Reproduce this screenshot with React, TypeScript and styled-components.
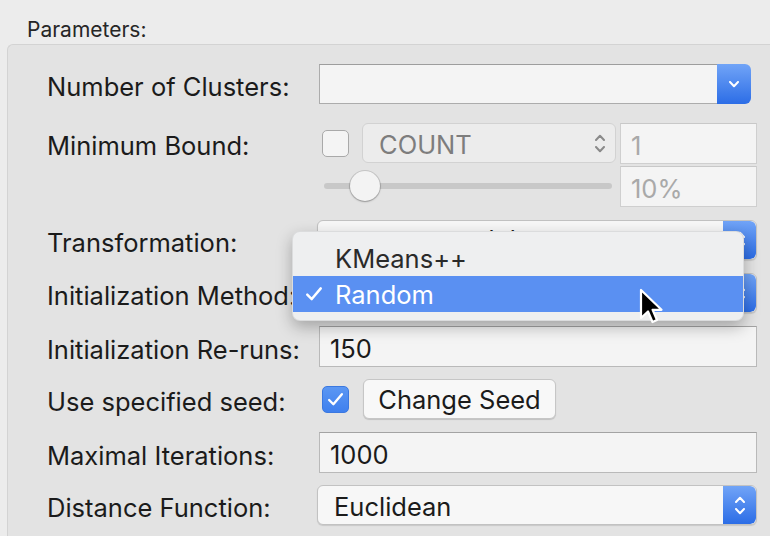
import React from "react"
import styled, { createGlobalStyle, css } from "styled-components"

const GlobalStyle = createGlobalStyle`
  html, body {
    margin: 0;
    background: #ececec;
    font-family: Inter, Roboto, "Liberation Sans", sans-serif;
    color: #1b1b1b;
  }
`

const Page = styled.div`
  position: relative;
  width: 770px;
  height: 536px;
  overflow: hidden;
  background: #ececec;
`

const Title = styled.div`
  height: 44px;
  box-sizing: border-box;
  padding: 18px 0 0 27px;
  font-size: 21px;
  line-height: 24px;
  color: #262626;
`

const Panel = styled.div`
  margin-left: 7px;
  height: 520px;
  box-sizing: border-box;
  background: #e3e3e3;
  border: 1px solid #d3d3d3;
  border-right: none;
  border-radius: 6px 0 0 0;
  padding: 19px 13px 0 39px;
`

const Form = styled.div`
  display: flex;
  flex-direction: column;
  gap: 13px;
`

const Row = styled.div<{ $top?: boolean; $shift?: number }>`
  display: grid;
  grid-template-columns: 270px 1fr;
  align-items: ${(p) => (p.$top ? "start" : "center")};
  height: ${(p) => (p.$top ? "auto" : "40px")};
  margin-top: ${(p) => p.$shift ?? 0}px;
`

const Label = styled.div`
  font-size: 25.5px;
  height: 40px;
  line-height: 45px;
  white-space: nowrap;
`

const Field = styled.div<{ $disabled?: boolean; $inset?: number }>`
  height: 41px;
  box-sizing: border-box;
  margin-left: ${(p) => p.$inset ?? 2}px;
  background: #f4f4f4;
  border: 1px solid ${(p) => (p.$disabled ? "#cfcfcf" : "#b9b9b9")};
  border-top-color: ${(p) => (p.$disabled ? "#c8c8c8" : "#a3a3a3")};
  padding-left: 10px;
  font-size: 25.5px;
  line-height: 44px;
  color: ${(p) => (p.$disabled ? "#a9a9a9" : "#1b1b1b")};
`

const Combo = styled.div`
  display: flex;
  height: 40px;
  margin: 0 6px 0 2px;
`

const ComboField = styled.div`
  flex: 1;
  background: #f4f4f4;
  border: 1px solid #acacac;
  border-right: none;
  border-top-color: #9d9d9d;
`

const blueGradient = css`
  background: linear-gradient(#71a4f7, #2c6de6);
  border-radius: 0 6px 6px 0;
  display: flex;
  flex-direction: column;
  align-items: center;
  justify-content: center;
`

const ComboButton = styled.div`
  ${blueGradient};
  width: 34px;
`

const Popup = styled.div<{ $disabled?: boolean }>`
  display: flex;
  height: 40px;
  box-sizing: border-box;
  border-radius: 6px;
  overflow: hidden;
  ${(p) =>
    p.$disabled
      ? css`
          background: #ececec;
          border: 1px solid #d2d2d2;
          color: #7d7d7d;
        `
      : css`
          background: #f7f7f7;
          border: 1px solid #c2c2c2;
          box-shadow: 0 1px 1px rgba(0, 0, 0, 0.12);
          color: #1b1b1b;
        `}
`

const PopupText = styled.div`
  flex: 1;
  padding-left: 16px;
  font-size: 25.5px;
  line-height: 42px;
  white-space: nowrap;
`

const Stepper = styled.div`
  ${blueGradient};
  width: 33px;
  gap: 5px;
`

const GrayStepper = styled.div`
  width: 30px;
  display: flex;
  flex-direction: column;
  align-items: center;
  justify-content: center;
  gap: 5px;
`

const MinGrid = styled.div`
  display: grid;
  grid-template-columns: 40px 258px 1fr;
  grid-template-rows: 40px 41px;
  row-gap: 3px;
  padding-left: 5px;
  align-items: center;
`

const Check = styled.div<{ $checked?: boolean }>`
  width: 27px;
  height: 27px;
  box-sizing: border-box;
  border-radius: 5px;
  display: flex;
  align-items: center;
  justify-content: center;
  ${(p) =>
    p.$checked
      ? css`
          background: linear-gradient(#5b97f3, #3f80ee);
          border: 1px solid #3b78e0;
        `
      : css`
          background: #f4f4f4;
          border: 1px solid #a9a9a9;
        `}
`

const Slider = styled.div`
  grid-column: 1 / 3;
  position: relative;
  height: 41px;
  margin-left: 2px;
  width: 288px;
`

const Track = styled.div`
  position: absolute;
  left: 0;
  right: 0;
  top: 17px;
  height: 6px;
  border-radius: 3px;
  background: #c8c8c8;
`

const Knob = styled.div`
  position: absolute;
  top: 5px;
  width: 30px;
  height: 30px;
  border-radius: 50%;
  background: #f3f3f3;
  box-shadow: 0 0 0 1px rgba(0, 0, 0, 0.12), 0 1px 2px rgba(0, 0, 0, 0.25);
`

const SeedCell = styled.div`
  display: flex;
  align-items: center;
  gap: 14px;
  padding-left: 5px;
`

const PushButton = styled.div`
  width: 193px;
  height: 40px;
  box-sizing: border-box;
  border-radius: 6px;
  background: #f8f8f8;
  border: 1px solid #c6c6c6;
  box-shadow: 0 1px 1px rgba(0, 0, 0, 0.15);
  font-size: 25.5px;
  line-height: 40px;
  text-align: center;
`

const Menu = styled.div`
  position: absolute;
  z-index: 2;
  left: 292px;
  top: 231px;
  width: 452px;
  box-sizing: border-box;
  padding: 8px 0;
  border-radius: 8px;
  background: #eeeff0;
  border: 1px solid rgba(0, 0, 0, 0.08);
  box-shadow: 0 6px 16px rgba(0, 0, 0, 0.28);
`

const MenuItem = styled.div<{ $active?: boolean }>`
  display: flex;
  align-items: center;
  height: 36px;
  font-size: 25.5px;
  color: ${(p) => (p.$active ? "#ffffff" : "#2a2a2a")};
  background: ${(p) => (p.$active ? "#5a90f2" : "transparent")};
`

const Tick = styled.div`
  width: 42px;
  display: flex;
  justify-content: flex-end;
  padding-right: 12px;
  box-sizing: border-box;
`

const Cursor = styled.svg`
  position: absolute;
  z-index: 3;
  left: 638px;
  top: 288px;
`

const Chevron = ({ up, color, w = 10 }: { up?: boolean; color: string; w?: number }) => (
  <svg width={w} height={7} viewBox="0 0 10 7">
    <path
      d={up ? "M1 6 L5 1.8 L9 6" : "M1 1 L5 5.2 L9 1"}
      fill="none"
      stroke={color}
      strokeWidth={2}
      strokeLinecap="round"
      strokeLinejoin="round"
    />
  </svg>
)

const TickMark = ({ color, size = 16 }: { color: string; size?: number }) => (
  <svg width={size} height={size} viewBox="0 0 16 16">
    <path d="M2 8.5 L6 12.5 L14 3" fill="none" stroke={color} strokeWidth={2.2} strokeLinecap="round" strokeLinejoin="round" />
  </svg>
)

const StepPopup = ({ text }: { text: string }) => (
  <Popup>
    <PopupText>{text}</PopupText>
    <Stepper>
      <Chevron up color="#ffffff" />
      <Chevron color="#ffffff" />
    </Stepper>
  </Popup>
)

export default function App() {
  return (
    <Page>
      <GlobalStyle />
      <Title>Parameters:</Title>
      <Panel>
        <Form>
          <Row>
            <Label>Number of Clusters:</Label>
            <Combo>
              <ComboField />
              <ComboButton>
                <Chevron color="#ffffff" w={14} />
              </ComboButton>
            </Combo>
          </Row>
          <Row $top $shift={6}>
            <Label>Minimum Bound:</Label>
            <MinGrid>
              <Check />
              <Popup $disabled style={{ width: 254 }}>
                <PopupText>COUNT</PopupText>
                <GrayStepper>
                  <Chevron up color="#8a8a8a" />
                  <Chevron color="#8a8a8a" />
                </GrayStepper>
              </Popup>
              <Field $disabled $inset={0}>1</Field>
              <Slider>
                <Track />
                <Knob style={{ left: 26 }} />
              </Slider>
              <Field $disabled $inset={0}>10%</Field>
            </MinGrid>
          </Row>
          <Row>
            <Label>Transformation:</Label>
            <StepPopup text="Standardize (Z)" />
          </Row>
          <Row>
            <Label>Initialization Method:</Label>
            <StepPopup text="Random" />
          </Row>
          <Row>
            <Label>Initialization Re-runs:</Label>
            <Field>150</Field>
          </Row>
          <Row>
            <Label>Use specified seed:</Label>
            <SeedCell>
              <Check $checked>
                <TickMark color="#ffffff" size={17} />
              </Check>
              <PushButton>Change Seed</PushButton>
            </SeedCell>
          </Row>
          <Row>
            <Label>Maximal Iterations:</Label>
            <Field>1000</Field>
          </Row>
          <Row>
            <Label>Distance Function:</Label>
            <StepPopup text="Euclidean" />
          </Row>
        </Form>
      </Panel>
      <Menu>
        <MenuItem>
          <Tick />
          KMeans++
        </MenuItem>
        <MenuItem $active>
          <Tick>
            <TickMark color="#ffffff" size={18} />
          </Tick>
          Random
        </MenuItem>
      </Menu>
      <Cursor width="28" height="40" viewBox="0 0 28 40">
        <path
          d="M3 2 L3 30 L10 23.5 L14.5 34 L19 32 L14.6 21.8 L23.5 21.8 Z"
          fill="#000000"
          stroke="#ffffff"
          strokeWidth={2.2}
          strokeLinejoin="round"
        />
      </Cursor>
    </Page>
  )
}
